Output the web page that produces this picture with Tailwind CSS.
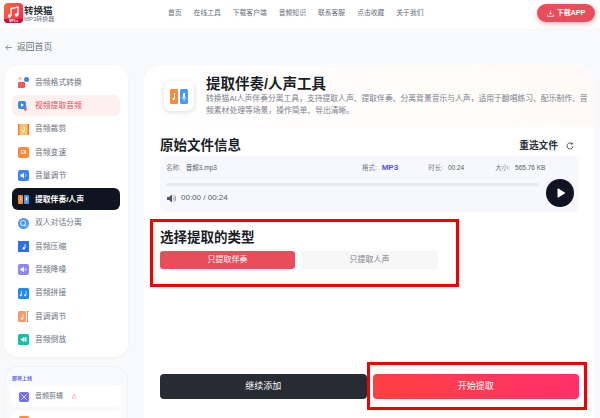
<!DOCTYPE html>
<html lang="zh-CN">
<head>
    <meta charset="UTF-8">
    <meta name="viewport" content="width=device-width, initial-scale=1.0">
    <title>转换猫 - 提取伴奏/人声工具</title>
    <script src="https://cdn.jsdelivr.net/npm/@tailwindcss/browser@4"></script>
</head>
<body class="relative w-[600px] h-[418px] overflow-hidden bg-[#f8f9fb] font-['Liberation_Sans','Noto_Sans_CJK_SC',sans-serif] text-[#1f2430]">

    <!-- top bar -->
    <header class="h-[28px] bg-white flex items-center pl-[4px] pr-[5px]">
        <div class="flex items-center w-[164px] gap-[1px] -mt-[2px]">
            <svg class="w-[19px] h-[20px]" viewBox="0 0 19 20">
                <defs><linearGradient id="lg" x1="0" y1="0" x2="1" y2="1"><stop offset="0" stop-color="#ff6a3c"/><stop offset="1" stop-color="#f0234f"/></linearGradient></defs>
                <rect width="19" height="20" rx="4" fill="url(#lg)"/>
                <path d="M7 13V5.5l7-1.500V12" fill="none" stroke="#fff" stroke-width="1.400"/>
                <circle cx="5.500" cy="13" r="1.800" fill="#fff"/><circle cx="12.500" cy="12" r="1.800" fill="#fff"/>
                <path d="M0 16h19v0a4 4 0 0 1-4 4H4a4 4 0 0 1-4-4z" fill="#c8123c"/>
                <text x="9.500" y="19.200" font-size="3" font-weight="700" fill="#fff" text-anchor="middle">MP3.x</text>
            </svg>
            <div class="flex flex-col pt-[1px]">
                <span class="text-[9.500px] leading-[11px] font-bold text-[#2b2f38]">转换猫</span>
                <span class="text-[6px] leading-[7px] text-[#6b7280]">MP3转换器</span>
            </div>
        </div>
        <nav class="flex gap-[12px] -mt-[2px] text-[6.800px] text-[#666c78]">
            <span>首页</span><span>在线工具</span><span>下载客户端</span><span>音频知识</span><span>联系客服</span><span>点击收藏</span><span>关于我们</span>
        </nav>
        <button class="ml-auto -mt-[2px] w-[58px] h-[18px] rounded-full bg-[#e94c5a] shadow-[0_2px_5px_rgba(233,76,90,0.4)] flex items-center justify-center gap-[3px] text-white text-[7px] font-bold">
            <svg class="w-[7px] h-[7px]" viewBox="0 0 8 8" fill="none" stroke="#fff" stroke-width="0.800"><path d="M4 0.500V5M2.300 3.400 4 5l1.700-1.600M0.700 5v2.300h6.600V5"/></svg>
            下载APP
        </button>
    </header>

    <!-- back link -->
    <div class="h-[37px] pt-[2px] pl-[5px] flex items-center gap-[5px] text-[8.800px] text-[#666c78]">
        <svg class="w-[7px] h-[7px]" viewBox="0 0 8 8" fill="none" stroke="#666c78" stroke-width="0.800"><path d="M8 4H1M3.800 1 1 4l2.800 3"/></svg>
        <span>返回首页</span>
    </div>

    <div class="flex pl-[4px] pr-[5px] gap-[16px]">
        <!-- sidebar -->
        <aside class="w-[124px] shrink-0">
            <div class="bg-white rounded-[14px] shadow-[0_1px_3px_rgba(0,0,0,0.04)] h-[292px] pt-[7px] px-[8px] flex flex-col gap-[2.300px] text-[7.800px] text-[#6b7280]">
                <div class="h-[21px] flex items-center gap-[6px] px-[6px]">
                    <svg class="w-[11px] h-[11px]" viewBox="0 0 11 11"><rect y="5" width="7" height="6" rx="1" fill="#ee5b52"/><circle cx="8.500" cy="2.500" r="2.500" fill="#3b82f6"/><rect y="0" width="4" height="3" rx="1" fill="#fbcfc9"/></svg>
                    <span>音频格式转换</span>
                </div>
                <div class="h-[21px] flex items-center gap-[6px] px-[6px] rounded-[6px] bg-[#fff0f0] text-[#e94c5a]">
                    <svg class="w-[11px] h-[11px]" viewBox="0 0 11 11"><rect y="1" width="8" height="8" rx="2" fill="#2f8cf0"/><path d="M3 3.200v3.600L6 5z" fill="#fff"/><path d="M8 6v3.500" stroke="#e94c5a"/><circle cx="7.300" cy="9.500" r="1.200" fill="#e94c5a"/></svg>
                    <span>视频提取音频</span>
                </div>
                <div class="h-[21px] flex items-center gap-[6px] px-[6px]">
                    <svg class="w-[11px] h-[11px]" viewBox="0 0 11 11"><rect width="11" height="11" fill="#f9c465"/><path d="M0 0h1.500v11H0zM9.500 0H11v11H9.500z" fill="#f07a2a"/><path d="M6.500 3v4" stroke="#fff" stroke-width="0.800"/><circle cx="5.500" cy="7.500" r="1.100" fill="#fff"/></svg>
                    <span>音频裁剪</span>
                </div>
                <div class="h-[21px] flex items-center gap-[6px] px-[6px]">
                    <div class="w-[11px] h-[11px] rounded-[2px] bg-[#f98a3c] flex items-center justify-center text-[5px] font-bold text-white">1X</div>
                    <span>音频变速</span>
                </div>
                <div class="h-[21px] flex items-center gap-[6px] px-[6px]">
                    <svg class="w-[11px] h-[11px]" viewBox="0 0 11 11"><rect width="11" height="11" rx="2" fill="#3b86ee"/><path d="M2.500 4.300h1.500L6 2.800v5.400L4 6.700H2.500z" fill="#fff"/><path d="M7 4a2 2 0 0 1 0 3" stroke="#fff" stroke-width="0.600" fill="none"/></svg>
                    <span>音量调节</span>
                </div>
                <div class="h-[22px] flex items-center gap-[6px] px-[6px] rounded-[6px] bg-[#0f1520] text-white font-bold">
                    <svg class="w-[11px] h-[11px]" viewBox="0 0 11 11"><rect width="5" height="9" y="1" rx="1" fill="#f98a3c"/><rect x="6" y="1" width="5" height="9" rx="1" fill="#4a9af5"/><path d="M2.800 3v3.500" stroke="#fff" stroke-width="0.600"/><rect x="7.800" y="3" width="1.400" height="3.500" rx="0.700" fill="#fff"/></svg>
                    <span>提取伴奏/人声</span>
                </div>
                <div class="h-[21px] flex items-center gap-[6px] px-[6px]">
                    <svg class="w-[11px] h-[11px]" viewBox="0 0 11 11"><circle cx="5.500" cy="5.500" r="5.500" fill="#4a9af5"/><circle cx="5" cy="5" r="2.500" fill="none" stroke="#fff" stroke-width="0.800"/><path d="M6 7.800h2.500" stroke="#fff" stroke-width="0.800"/></svg>
                    <span>双人对话分离</span>
                </div>
                <div class="h-[21px] flex items-center gap-[6px] px-[6px]">
                    <svg class="w-[11px] h-[11px]" viewBox="0 0 11 11"><rect width="11" height="11" fill="#2f6fe4"/><path d="M7 3v4" stroke="#fff" stroke-width="0.800"/><circle cx="5.800" cy="7.300" r="1.200" fill="#fff"/></svg>
                    <span>音频压缩</span>
                </div>
                <div class="h-[21px] flex items-center gap-[6px] px-[6px]">
                    <svg class="w-[11px] h-[11px]" viewBox="0 0 11 11"><rect width="11" height="11" rx="2" fill="#8f86f5"/><path d="M2.500 4.300h1.500L6 2.800v5.400L4 6.700H2.500z" fill="#fff"/><path d="M7.300 4v3M8.500 4.600v1.800" stroke="#fff" stroke-width="0.500"/></svg>
                    <span>音频降噪</span>
                </div>
                <div class="h-[21px] flex items-center gap-[6px] px-[6px]">
                    <svg class="w-[11px] h-[11px]" viewBox="0 0 11 11"><rect width="11" height="11" rx="1.500" fill="#1f8bf0"/><path d="M3.500 3v4M8 3v4" stroke="#fff" stroke-width="0.700"/><circle cx="2.700" cy="7.300" r="1" fill="#fff"/><circle cx="7.200" cy="7.300" r="1" fill="#fff"/></svg>
                    <span>音频拼接</span>
                </div>
                <div class="h-[21px] flex items-center gap-[6px] px-[6px]">
                    <svg class="w-[11px] h-[11px]" viewBox="0 0 11 11"><rect width="8" height="11" rx="1.500" fill="#f99a6b"/><path d="M5 3v4.500" stroke="#fff" stroke-width="0.700"/><circle cx="4" cy="7.700" r="1.100" fill="#fff"/><path d="M9.500 0v11M8.500 0.500h2M8.500 10.500h2" stroke="#e8603a" stroke-width="0.700"/></svg>
                    <span>音调调节</span>
                </div>
                <div class="h-[21px] flex items-center gap-[6px] px-[6px]">
                    <svg class="w-[11px] h-[11px]" viewBox="0 0 11 11"><rect width="11" height="11" rx="1.500" fill="#14c0a8"/><path d="M2.500 5.500 6 3v5z" fill="#fff"/><rect x="6.500" y="3.500" width="2" height="4" fill="#fff"/></svg>
                    <span>音频倒放</span>
                </div>
            </div>

            <div class="mt-[9px] rounded-t-[14px] bg-[#f9fafc] border border-[#f0f1f5] h-[70px] px-[6px]">
                <p class="pt-[7px] pl-[1px] h-[19px] text-[5px] leading-[8px] font-bold text-[#6366f1]">即将上线</p>
                <div class="h-[21px] rounded-[5px] bg-white flex items-center gap-[6px] pl-[8px] text-[7px] text-[#6b7280]">
                    <svg class="w-[10px] h-[10px]" viewBox="0 0 10 10"><rect width="10" height="10" rx="2" fill="#7170f0"/><path d="M2.500 2.500 7.500 7.500M7.500 2.500 2.500 7.500" stroke="#fff" stroke-width="0.800"/></svg>
                    <span>音频剪辑</span>
                    <svg class="ml-[3px] w-[4px] h-[5px]" viewBox="0 0 4 5" fill="none" stroke="#f08a90" stroke-width="0.600"><path d="M2 0.300C2.300 1.500 3.700 2 3.700 3.200a1.700 1.700 0 0 1-3.400 0C.3 2.500.7 2 1 1.800c.1.500.4.600.6.600.3-.6.500-1.300.4-2.100z"/></svg>
                </div>
                <div class="mt-[4px] h-[21px] rounded-[5px] bg-white pl-[8px] pt-[5px]">
                    <div class="w-[10px] h-[10px] rounded-[2px] bg-[#f98a3c]"></div>
                </div>
            </div>
        </aside>

        <!-- main panel -->
        <main class="flex-1 h-[353px] bg-white rounded-t-[20px]">
            <div class="h-[62px] rounded-t-[20px] bg-gradient-to-r from-white to-[#fffaf7] pt-[16px] pl-[20px] pr-[7px] flex gap-[12px]">
                <div class="w-[30px] h-[30px] shrink-0 rounded-[7px] bg-white shadow-[0_1px_5px_rgba(0,0,0,0.15)] flex items-center justify-center">
                    <svg class="w-[18px] h-[15px]" viewBox="0 0 18 15">
                        <rect width="8" height="15" rx="1.500" fill="#f98a3c"/><rect x="10" width="8" height="15" rx="1.500" fill="#4a9af5"/>
                        <path d="M4.500 4v5.500" stroke="#fff"/><circle cx="3.500" cy="10" r="1.200" fill="#fff"/>
                        <rect x="13" y="4" width="2" height="5" rx="1" fill="#fff"/><path d="M12 8a2 2 0 0 0 4 0M14 10v2" stroke="#fff" stroke-width="0.600" fill="none"/>
                    </svg>
                </div>
                <div class="-mt-[6px]">
                    <h1 class="text-[14.500px] leading-[18px] font-bold text-[#1a1e27]">提取伴奏/人声工具</h1>
                    <p class="text-[7.800px] leading-[12px] text-[#7a808c]">转换猫AI人声伴奏分离工具，支持提取人声、提取伴奏、分离背景音乐与人声，适用于翻唱练习、配乐制作、音频素材处理等场景，操作简单、导出清晰。</p>
                </div>
            </div>

            <div class="px-[16px]">
                <div class="mt-[9px] h-[20px] flex items-center justify-between pr-[5px]">
                    <h2 class="text-[13.500px] font-bold text-[#1a1e27]">原始文件信息</h2>
                    <div class="flex items-center gap-[8px]">
                        <span class="text-[9.700px] font-bold text-[#2b2f38]">重选文件</span>
                        <svg class="w-[8px] h-[8px]" viewBox="0 0 8 8" fill="none" stroke="#444" stroke-width="0.900"><path d="M7 4a3 3 0 1 1-1-2.300M6.300 0.500v1.600H4.700"/></svg>
                    </div>
                </div>

                <div class="relative h-[56px] rounded-[6px] bg-[#f7f8fd] px-[6px] pt-[8px]">
                    <div class="h-[8px] flex items-center text-[6.500px] text-[#7a808c]">
                        <span>名称:</span><span class="ml-[5px] text-[#555b67]">音频3.mp3</span>
                        <span class="ml-[145px]">格式:</span><span class="ml-[5px] text-[8px] font-bold text-[#4f52e8]">MP3</span>
                        <span class="ml-[30px]">时长:</span><span class="ml-[5px] text-[#555b67]">00:24</span>
                        <span class="ml-[31px]">大小:</span><span class="ml-[5px] text-[#555b67]">565.76 KB</span>
                    </div>
                    <div class="mt-[11px] mr-[34px] h-[3px] rounded-full bg-[#e8e9ee]"></div>
                    <div class="mt-[6px] flex items-center gap-[5px] pl-[1px] text-[8px] text-[#555b67]">
                        <svg class="w-[9px] h-[9px]" viewBox="0 0 9 9"><path d="M0 3h2l3-2.500v8L2 6H0z" fill="#4b5563"/><path d="M6 2.500a2.500 2.500 0 0 1 0 4M7 1.200a4 4 0 0 1 0 6.600" stroke="#4b5563" stroke-width="0.600" fill="none"/></svg>
                        <span>00:00 / 00:24</span>
                    </div>
                    <div class="absolute right-[5px] top-[23px] w-[28px] h-[28px] rounded-full bg-[#0f1520] flex items-center justify-center">
                        <svg class="w-[10px] h-[10px] ml-[1px]" viewBox="0 0 10 10"><path d="M1.500 1v8a0.500 0.500 0 0 0 .8.400l6.500-4a0.500 0.500 0 0 0 0-.8l-6.500-4A0.500 0.500 0 0 0 1.500 1z" fill="#fff"/></svg>
                    </div>
                </div>

                <h2 class="mt-[16px] text-[13.500px] leading-[20px] font-bold text-[#1a1e27]">选择提取的类型</h2>
                <div class="mt-[3px] flex gap-[6px] text-[8px]">
                    <div class="w-[135px] h-[18px] rounded-[3px] bg-[#e94c5a] text-white flex items-center justify-center">只提取伴奏</div>
                    <div class="w-[137px] h-[18px] rounded-[3px] bg-[#f7f7f7] text-[#7a7f88] flex items-center justify-center">只提取人声</div>
                </div>

                <div class="mt-[105px] flex gap-[6px] text-[9px] text-white">
                    <button class="flex-1 h-[25px] rounded-[4px] bg-[#272b33]">继续添加</button>
                    <button class="flex-1 h-[25px] rounded-[4px] bg-gradient-to-r from-[#ff4040] to-[#ff3068]">开始提取</button>
                </div>
            </div>
        </main>
    </div>

    <!-- red annotation boxes -->
    <div class="absolute left-[150px] top-[219px] w-[309px] h-[68px] border-[3px] border-[#f50000]"></div>
    <div class="absolute left-[367px] top-[362px] w-[220px] h-[48px] border-[3px] border-[#f50000]"></div>
</body>
</html>
